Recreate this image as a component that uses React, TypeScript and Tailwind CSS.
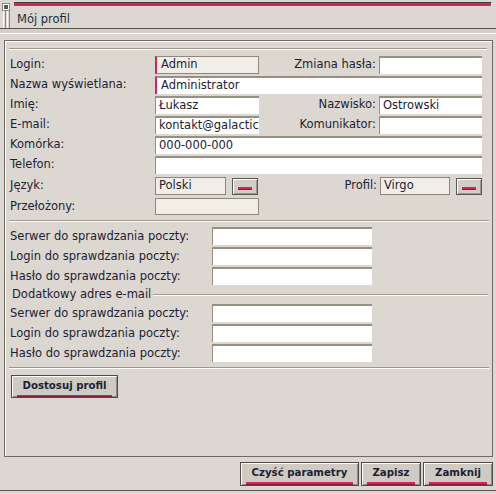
import React from 'react';

const PINK = 'bg-[#d6215b]';

// sunken text field
const Field: React.FC<{ w: string; value?: string; mark?: boolean; ro?: boolean; h?: string }> = ({
  w,
  value,
  mark,
  ro,
  h = 'h-[18px]',
}) => (
  <div
    className={`${w} ${h} flex items-center overflow-hidden whitespace-nowrap ${
      ro ? 'bg-[#f1eee8] border border-[#8f897c]' : 'bg-white border-t-2 border-l border-[#978f80]'
    } ${mark ? 'border-l-2 border-l-[#d6215b] pl-[4px]' : 'pl-[3px]'}`}
  >
    {value}
  </div>
);

const Label: React.FC<{ w: string; children: React.ReactNode; right?: boolean }> = ({ w, children, right }) => (
  <div className={`${w} shrink-0 whitespace-nowrap ${right ? 'text-right pr-[3px]' : ''}`}>{children}</div>
);

const PickButton: React.FC<{ className?: string }> = ({ className = '' }) => (
  <div
    className={`w-[26px] h-[17px] flex items-end justify-center pb-[4px] bg-[#d2cec6] border border-[#5c5952] shadow-[inset_1px_1px_0_#fff,inset_-1px_-1px_0_#9d988f] ${className}`}
  >
    <div className={`w-[14px] h-[3px] ${PINK} border-b border-[#8a1b3c]`} />
  </div>
);

const Button: React.FC<{ w: string; h: string; label: string }> = ({ w, h, label }) => (
  <div
    className={`${w} ${h} flex flex-col items-stretch px-[5px] pt-[4px] bg-[#cfcbc3] border border-[#4e4b45] shadow-[inset_1px_1px_0_#fff,inset_-1px_-1px_0_#8f8a81]`}
  >
    <span className="font-bold text-center text-[10.2px] leading-[12px]">{label}</span>
    <div className={`mt-[3px] h-[3px] ${PINK} border-b border-[#7e2040]`} />
  </div>
);

const Separator: React.FC<{ className?: string }> = ({ className = '' }) => (
  <div className={`ml-[4px] w-[480px] h-[2px] border-t border-[#9f998d] border-b border-b-white ${className}`} />
);

export default function App() {
  const mail = ['Serwer do sprawdzania poczty:', 'Login do sprawdzania poczty:', 'Hasło do sprawdzania poczty:'];

  return (
    <div className="w-[496px] h-[494px] bg-[#dcd8d1] text-[#1b2233] text-[11.5px] font-['DejaVu_Sans',sans-serif] flex flex-col overflow-hidden">
      {/* window strip */}
      <div className="h-[11px] flex items-start pt-[2px]">
        <div className="ml-[2px] mt-[1px] w-[8px] h-[8px] border border-[#8c887f] bg-white flex items-center justify-center">
          <div className="w-[4px] h-[4px] bg-[#5b5851]" />
        </div>
        <div className={`ml-[4px] w-[478px] h-[4px] ${PINK} border-t border-[#3f3d3a] border-r border-r-white`} />
      </div>

      {/* title */}
      <div className="h-[17px] flex items-end">
        <div className="ml-[3px] h-[17px] flex gap-[1px]">
          <div className="w-[1px] h-full bg-white" />
          <div className="w-[1px] h-full bg-[#8c887f]" />
          <div className="w-[1px] h-full bg-white" />
          <div className="w-[1px] h-full bg-[#8c887f]" />
        </div>
        <span className="ml-[7px] pb-[1px] text-[#1f2a40] leading-[15px]">Mój profil</span>
      </div>
      <div className="h-[1px] bg-[#57544d]" />
      <div className="h-[4px] bg-[#d3cfc8]" />
      <div className="h-[1px] bg-white" />

      {/* panel */}
      <div className="mt-[6px] ml-[4px] w-[489px] h-[417px] border border-[#6f6b63] shadow-[inset_1px_1px_0_#fff] flex flex-col">
        <div className="mt-[7px] ml-[4px] w-[478px] h-[2px] border-t border-[#9f998d] border-b border-b-white" />

        <div className="mt-[6px] pl-[5px] flex flex-col gap-[2px]">
          <div className="flex items-center">
            <Label w="w-[145px]">Login:</Label>
            <Field w="w-[104px]" value="Admin" mark ro />
            <Label w="w-[120px]" right>Zmiana hasła:</Label>
            <Field w="w-[103px]" />
          </div>
          <div className="flex items-center">
            <Label w="w-[145px]">Nazwa wyświetlana:</Label>
            <Field w="w-[327px]" value="Administrator" mark />
          </div>
          <div className="flex items-center">
            <Label w="w-[145px]">Imię:</Label>
            <Field w="w-[104px]" value="Łukasz" />
            <Label w="w-[120px]" right>Nazwisko:</Label>
            <Field w="w-[103px]" value="Ostrowski" />
          </div>
          <div className="flex items-center">
            <Label w="w-[145px]">E-mail:</Label>
            <Field w="w-[104px]" value="kontakt@galactica.pl" />
            <Label w="w-[120px]" right>Komunikator:</Label>
            <Field w="w-[103px]" />
          </div>
          <div className="flex items-center">
            <Label w="w-[145px]">Komórka:</Label>
            <Field w="w-[327px]" value="000-000-000" />
          </div>
          <div className="flex items-center">
            <Label w="w-[145px]">Telefon:</Label>
            <Field w="w-[327px]" />
          </div>
          <div className="mt-[1px] flex items-center">
            <Label w="w-[145px]">Język:</Label>
            <Field w="w-[71px]" value="Polski" ro />
            <PickButton className="ml-[6px]" />
            <Label w="w-[122px]" right>Profil:</Label>
            <Field w="w-[70px]" value="Virgo" ro />
            <PickButton className="ml-[6px]" />
          </div>
          <div className="mt-[1px] flex items-center">
            <Label w="w-[145px]">Przełożony:</Label>
            <Field w="w-[104px]" h="h-[17px]" ro />
          </div>
        </div>

        <Separator className="mt-[5px]" />

        <div className="mt-[5px] pl-[5px] flex flex-col gap-[2px]">
          {mail.map((m) => (
            <div key={m} className="flex items-center">
              <Label w="w-[202px]">{m}</Label>
              <Field w="w-[160px]" />
            </div>
          ))}
        </div>

        <div className="h-[19px] flex items-center pl-[7px] pr-[4px]">
          <span className="whitespace-nowrap">Dodatkowy adres e-mail</span>
          <div className="ml-[2px] flex-1 h-[2px] border-t border-[#9f998d] border-b border-b-white" />
        </div>

        <div className="pl-[5px] flex flex-col gap-[2px]">
          {mail.map((m) => (
            <div key={m + '2'} className="flex items-center">
              <Label w="w-[202px]">{m}</Label>
              <Field w="w-[160px]" />
            </div>
          ))}
        </div>

        <Separator className="mt-[5px]" />

        <div className="mt-[6px] ml-[6px]">
          <Button w="w-[107px]" h="h-[23px]" label="Dostosuj profil" />
        </div>
      </div>

      {/* footer buttons */}
      <div className="mt-[5px] flex justify-end pr-[3px] gap-[2px]">
        <Button w="w-[119px]" h="h-[24px]" label="Czyść parametry" />
        <Button w="w-[60px]" h="h-[24px]" label="Zapisz" />
        <Button w="w-[70px]" h="h-[24px]" label="Zamknij" />
      </div>
      <div className="mt-[4px] h-[1px] bg-[#57544d]" />
    </div>
  );
}
